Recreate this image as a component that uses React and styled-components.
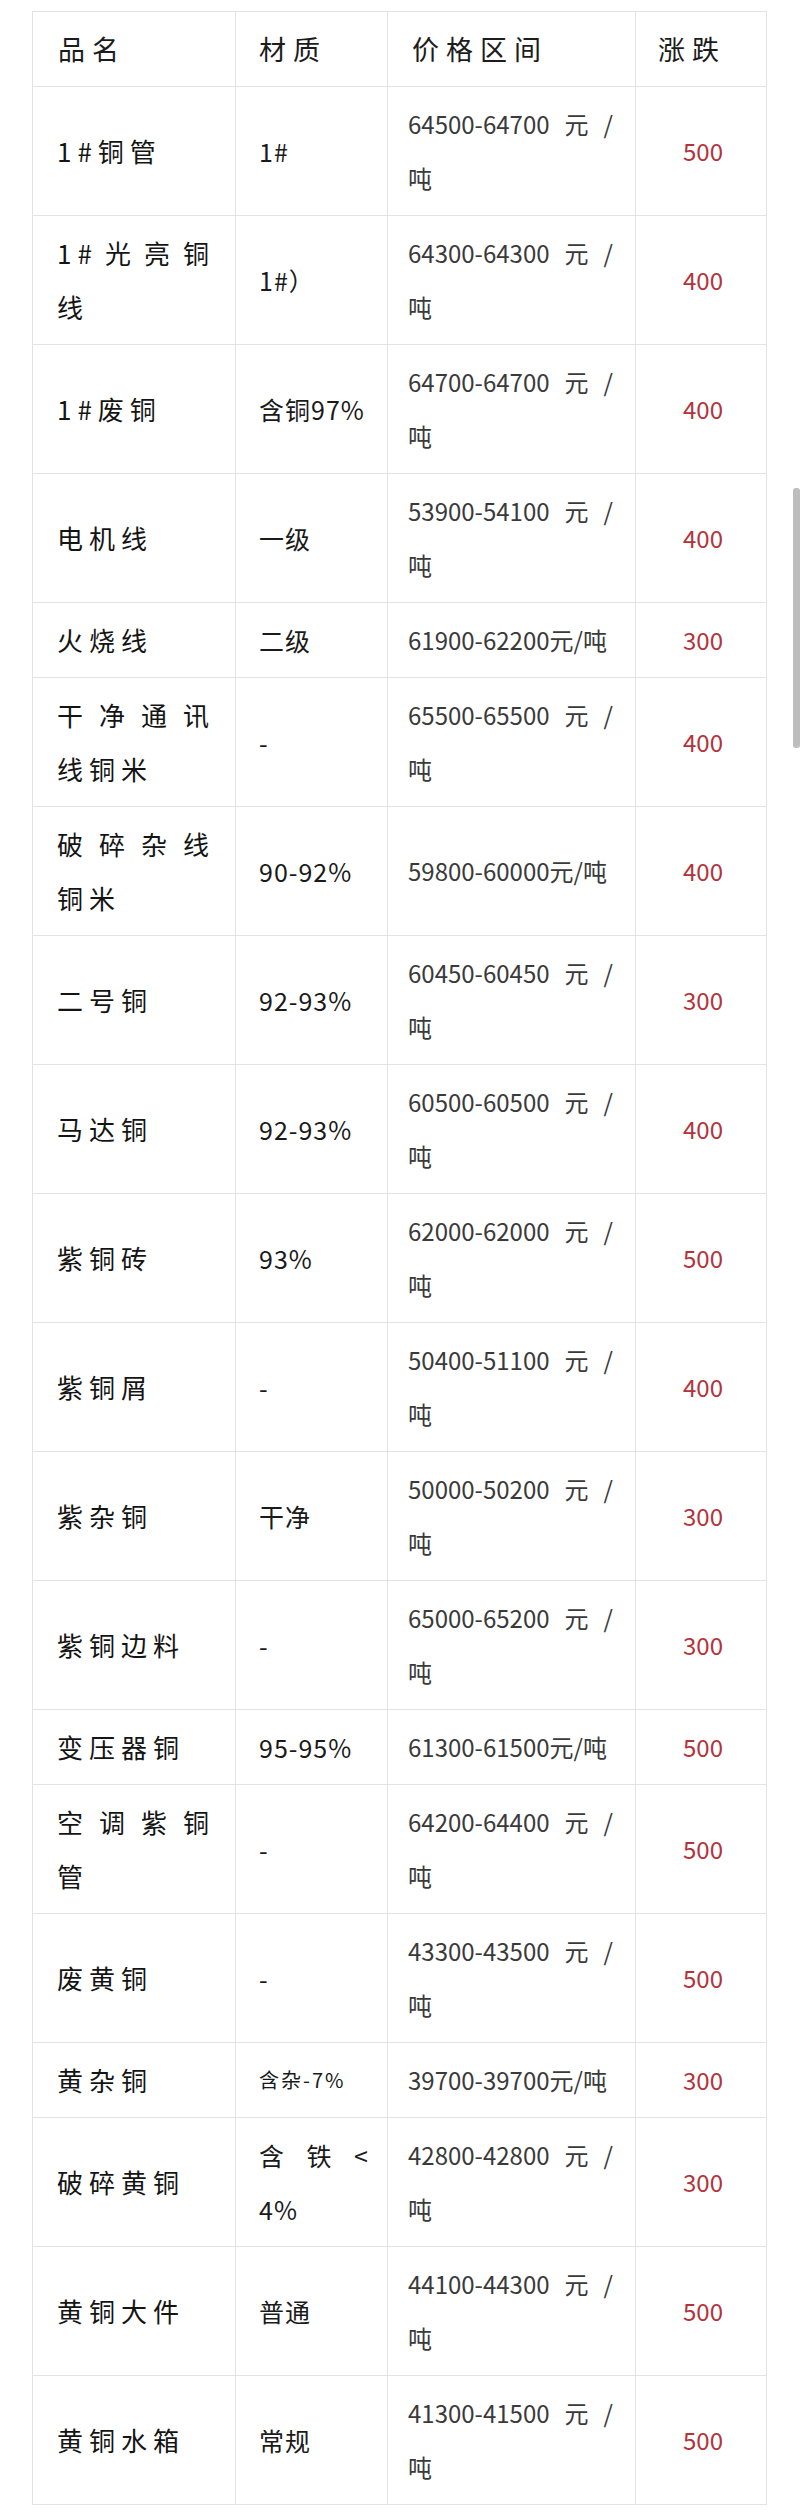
import React from 'react';
import styled, { createGlobalStyle } from 'styled-components';

const GlobalStyle = createGlobalStyle`
  body {
    margin: 0;
    background: #ffffff;
    font-family: "Noto Sans CJK SC", "Noto Sans", sans-serif;
  }
`;

const Page = styled.div`
  position: relative;
  box-sizing: border-box;
  min-height: 2513px;
  padding: 11px 0 0 32px;
`;

const Table = styled.table`
  border-collapse: collapse;
  table-layout: fixed;
  width: 735px;
`;

const Col = styled.col`
  width: ${({ $w }) => $w}px;
`;

const Cell = styled.td`
  border: 1px solid #e3e3e3;
  padding: 10px 22px 10px 23px;
  line-height: 54px;
  vertical-align: middle;
  text-align: left;
`;

const HeadCell = styled(Cell).attrs({ as: 'th' })`
  font-size: 27px;
  font-weight: 400;
  letter-spacing: 7px;
  color: #1c1c1c;
  padding-left: ${({ $left }) => $left || 23}px;
`;

const NameCell = styled(Cell)`
  font-size: 26px;
  letter-spacing: 6px;
  color: #141414;
  padding-left: 24px;
  padding-right: 20px;
`;

const GradeCell = styled(Cell)`
  font-size: ${({ $small }) => ($small ? 20 : 25)}px;
  letter-spacing: ${({ $small }) => ($small ? 2 : 1)}px;
  color: #1a1a1a;
  padding-right: 18px;
`;

const PriceCell = styled(Cell)`
  font-size: 24px;
  color: #3a3a3a;
  padding-left: 20px;
  padding-right: 22px;
`;

const ChangeCell = styled(Cell)`
  font-size: 24px;
  color: #b3333c;
  padding-left: 47px;
`;

const Line = styled.span`
  display: block;
  white-space: nowrap;
  ${({ $spread }) =>
    $spread &&
    `
    text-align: justify;
    text-align-last: justify;
  `}
`;

const ScrollThumb = styled.div`
  position: absolute;
  top: 488px;
  right: 0;
  width: 7px;
  height: 260px;
  border-radius: 3px;
  background: #bdbdbd;
`;

const rows = [
  { name: '1#铜管', grade: '1#', price: ['64500-64700元/', '吨'], change: 500 },
  { name: ['1#光亮铜', '线'], grade: '1#）', price: ['64300-64300元/', '吨'], change: 400 },
  { name: '1#废铜', grade: '含铜97%', price: ['64700-64700元/', '吨'], change: 400 },
  { name: '电机线', grade: '一级', price: ['53900-54100元/', '吨'], change: 400 },
  { name: '火烧线', grade: '二级', price: '61900-62200元/吨', change: 300 },
  { name: ['干净通讯', '线铜米'], grade: '-', price: ['65500-65500元/', '吨'], change: 400 },
  { name: ['破碎杂线', '铜米'], grade: '90-92%', price: '59800-60000元/吨', change: 400 },
  { name: '二号铜', grade: '92-93%', price: ['60450-60450元/', '吨'], change: 300 },
  { name: '马达铜', grade: '92-93%', price: ['60500-60500元/', '吨'], change: 400 },
  { name: '紫铜砖', grade: '93%', price: ['62000-62000元/', '吨'], change: 500 },
  { name: '紫铜屑', grade: '-', price: ['50400-51100元/', '吨'], change: 400 },
  { name: '紫杂铜', grade: '干净', price: ['50000-50200元/', '吨'], change: 300 },
  { name: '紫铜边料', grade: '-', price: ['65000-65200元/', '吨'], change: 300 },
  { name: '变压器铜', grade: '95-95%', price: '61300-61500元/吨', change: 500 },
  { name: ['空调紫铜', '管'], grade: '-', price: ['64200-64400元/', '吨'], change: 500 },
  { name: '废黄铜', grade: '-', price: ['43300-43500元/', '吨'], change: 500 },
  { name: '黄杂铜', grade: '含杂-7%', small: true, price: '39700-39700元/吨', change: 300 },
  { name: '破碎黄铜', grade: ['含铁<', '4%'], price: ['42800-42800元/', '吨'], change: 300 },
  { name: '黄铜大件', grade: '普通', price: ['44100-44300元/', '吨'], change: 500 },
  { name: '黄铜水箱', grade: '常规', price: ['41300-41500元/', '吨'], change: 500 },
];

// a string is one line; an array is a justified first line plus a remainder
function Lines({ value }) {
  if (!Array.isArray(value)) return <Line>{value}</Line>;
  return (
    <>
      <Line $spread>{value[0]}</Line>
      <Line>{value[1]}</Line>
    </>
  );
}

function App() {
  return (
    <Page>
      <GlobalStyle />
      <Table>
        <colgroup>
          <Col $w={203} />
          <Col $w={152} />
          <Col $w={248} />
          <Col $w={131} />
        </colgroup>
        <thead>
          <tr>
            <HeadCell $left={25}>品名</HeadCell>
            <HeadCell>材质</HeadCell>
            <HeadCell $left={24}>价格区间</HeadCell>
            <HeadCell $left={22}>涨跌</HeadCell>
          </tr>
        </thead>
        <tbody>
          {rows.map((row, i) => (
            <tr key={i}>
              <NameCell>
                <Lines value={row.name} />
              </NameCell>
              <GradeCell $small={row.small}>
                <Lines value={row.grade} />
              </GradeCell>
              <PriceCell>
                <Lines value={row.price} />
              </PriceCell>
              <ChangeCell>{row.change}</ChangeCell>
            </tr>
          ))}
        </tbody>
      </Table>
      <ScrollThumb />
    </Page>
  );
}

export default App;
